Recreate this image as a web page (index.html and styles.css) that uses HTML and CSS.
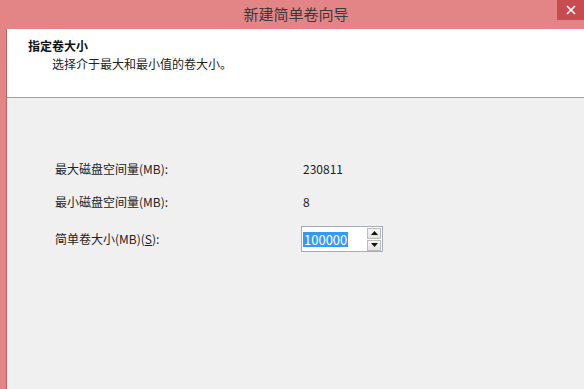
FILE: index.html
```html
<!DOCTYPE html>
<html lang="zh-CN">
<head>
<meta charset="utf-8">
<title>新建简单卷向导</title>
<link rel="stylesheet" href="styles.css">
</head>
<body>
<div class="window">
  <div class="titlebar">
    <span class="title">新建简单卷向导</span>
    <div class="close">
      <svg width="12" height="12" viewBox="0 0 12 12"><path d="M2 2 L10 10 M10 2 L2 10" stroke="#ffffff" stroke-width="1.6" fill="none"/></svg>
    </div>
  </div>
  <div class="main">
    <div class="content">
      <div class="header">
        <div class="h-title">指定卷大小</div>
        <div class="h-sub">选择介于最大和最小值的卷大小。</div>
      </div>
      <div class="body">
        <div class="row r1">
          <span class="label">最大磁盘空间量(MB):</span>
          <span class="value">230811</span>
        </div>
        <div class="row r2">
          <span class="label">最小磁盘空间量(MB):</span>
          <span class="value">8</span>
        </div>
        <div class="row r3">
          <span class="label">简单卷大小(MB)(<u>S</u>):</span>
          <div class="spin">
            <div class="field"><span class="sel">100000</span></div>
            <div class="arrows">
              <div class="btn"><svg width="7" height="4" viewBox="0 0 7 4"><path d="M0 4 L3.5 0 L7 4 Z" fill="#111"/></svg></div>
              <div class="btn"><svg width="7" height="4" viewBox="0 0 7 4"><path d="M0 0 L3.5 4 L7 0 Z" fill="#111"/></svg></div>
            </div>
          </div>
        </div>
      </div>
    </div>
  </div>
</div>
</body>
</html>
```
FILE: styles.css
```css
* { box-sizing: border-box; }
html, body {
  margin: 0;
  padding: 0;
  width: 584px;
  height: 389px;
  overflow: hidden;
}
body {
  font-family: "Noto Sans CJK SC", "Noto Sans", sans-serif;
  font-size: 12px;
  color: #222;
}
.window {
  width: 584px;
  height: 389px;
  background: #e38587;
  display: flex;
  flex-direction: column;
}
.titlebar {
  position: relative;
  height: 29px;
  flex: none;
  display: flex;
  align-items: center;
  justify-content: center;
}
.title {
  font-size: 15px;
  color: #3a3a3a;
  line-height: 20px;
  margin-left: 8px;
  margin-top: -2px;
}
.close {
  position: absolute;
  top: 0;
  right: 0;
  width: 27px;
  height: 20px;
  background: #c84b51;
  display: flex;
  align-items: center;
  justify-content: center;
}
.main {
  flex: 1;
  display: flex;
  margin-left: 6px;
  border-left: 1px solid #b86468;
}
.content {
  flex: 1;
  display: flex;
  flex-direction: column;
}
.header {
  height: 69px;
  flex: none;
  background: #ffffff;
  border-bottom: 1px solid #a0a0a0;
  padding: 8px 0 0 21px;
  line-height: 17.5px;
}
.h-title {
  font-weight: bold;
  color: #111;
}
.h-sub {
  padding-left: 24px;
  color: #222;
}
.body {
  flex: 1;
  background: #f0f0f0;
  padding: 60px 0 0 48px;
}
.row {
  display: flex;
  align-items: center;
}
.r1, .r2 { height: 20px; }
.r2 { margin-top: 13px; }
.r3 { margin-top: 14px; height: 26px; }
.label {
  width: 248px;
  flex: none;
  color: #222;
}
.value { color: #222; }
.label u { text-decoration: underline; }
.spin {
  width: 82px;
  height: 26px;
  margin-left: -2px;
  margin-top: 2px;
  border: 1px solid #a7abb3;
  background: #fff;
  display: flex;
  align-items: center;
  padding-left: 1px;
}
.field {
  flex: 1;
  display: flex;
  align-items: center;
}
.sel {
  background: #3399ff;
  color: #fff;
  font-size: 13px;
  line-height: 15px;
  padding: 0 1px 0 1px;
}
.arrows {
  width: 14px;
  margin-right: 1px;
  display: flex;
  flex-direction: column;
  gap: 1px;
}
.btn {
  height: 11px;
  border: 1px solid #bcbcbc;
  background: linear-gradient(#f6f6f6, #e2e2e2);
  display: flex;
  align-items: center;
  justify-content: center;
}
```
